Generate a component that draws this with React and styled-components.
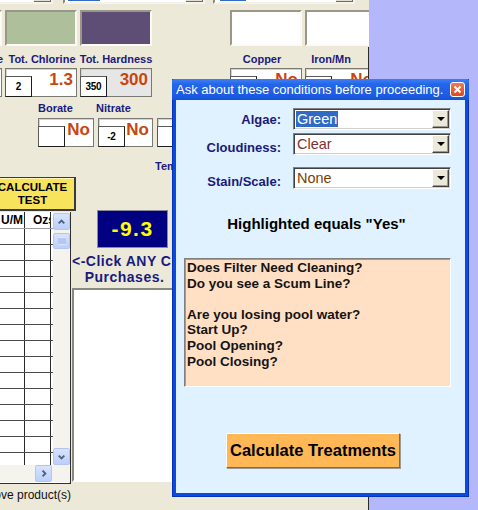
import React from "react";
import styled, { createGlobalStyle } from "styled-components";

const FONT = `"Liberation Sans", Arial, sans-serif`;

const GlobalStyle = createGlobalStyle`
  html, body {
    margin: 0;
    padding: 0;
  }
  body {
    background: #b4b8fa;
    overflow: hidden;
  }
`;

const Screen = styled.div`
  position: relative;
  display: flex;
  width: 478px;
  height: 510px;
  overflow: hidden;
  font-family: ${FONT};
`;

const AppWindow = styled.div`
  position: relative;
  flex: 0 0 369px;
  height: 510px;
  background: #ece9d8;
  overflow: hidden;

  &::after {
    content: "";
    position: absolute;
    right: 0;
    top: 47px;
    bottom: 0;
    width: 1px;
    background: #2b2b2b;
  }
`;

const Desktop = styled.div`
  flex: 1;
  background: #b4b8fa;
`;

const Form = styled.div`
  display: flex;
  flex-direction: column;
`;

/* ---------- top strip of combo boxes (mostly scrolled off) ---------- */

const ComboStrip = styled.div`
  display: flex;
  height: 22px;
  margin-top: -18px;
`;

const StripCombo = styled.div`
  box-sizing: border-box;
  display: flex;
  align-items: center;
  width: ${(p) => p.$w}px;
  margin-left: ${(p) => p.$ml}px;
  height: 22px;
  background: #fff;
  border: 2px solid;
  border-color: #8c8a80 #f4f3ee #f4f3ee #8c8a80;
`;

const StripPick = styled.span`
  margin-left: ${(p) => p.$ml}px;
  width: ${(p) => p.$w}px;
  height: 16px;
  background: #316ac5;
`;

const StripButton = styled.span`
  box-sizing: border-box;
  margin-left: auto;
  width: 17px;
  height: 18px;
  background: #e3e0d2;
  border-right: 1px solid #6b6b6b;
  border-bottom: 1px solid #6b6b6b;
`;

/* ---------- colour swatches, labels, value boxes ---------- */

const TopGrid = styled.div`
  display: grid;
  grid-template-columns: repeat(6, 72px);
  grid-template-rows: 36px 22px 29px;
  column-gap: 3px;
  margin-left: -70px;
  margin-top: 6px;
`;

const Swatch = styled.div`
  box-sizing: border-box;
  grid-row: 1;
  grid-column: ${(p) => p.$col};
  background: ${(p) => p.$color};
  border: 2px solid;
  border-color: #9a978a #fbfaf6 #fbfaf6 #9a978a;
`;

const NavyLabel = styled.div`
  font-size: 11px;
  font-weight: 700;
  line-height: 13px;
  color: #1a1a80;
  white-space: nowrap;
`;

const TopLabel = styled(NavyLabel)`
  grid-row: 2;
  grid-column: ${(p) => p.$col};
  align-self: end;
  justify-self: ${(p) => p.$justify || "center"};
  margin-bottom: 2px;
  margin-left: ${(p) => p.$dx || 0}px;
  margin-right: ${(p) => p.$dr || 0}px;
`;

const ValueBox = styled.div`
  box-sizing: border-box;
  display: flex;
  grid-row: 3;
  grid-column: ${(p) => p.$col};
  width: ${(p) => (p.$w ? `${p.$w}px` : "auto")};
  height: 29px;
  background: ${(p) => p.$bg || "#fff"};
  border: 1px solid #7a7a72;
  box-shadow: inset 1px 1px 0 #d6d3c6;
`;

const SmallBox = styled.div`
  box-sizing: border-box;
  align-self: flex-end;
  display: flex;
  align-items: center;
  justify-content: center;
  width: 27px;
  height: 21px;
  margin: 0 0 -1px -1px;
  background: #fff;
  border: 1px solid;
  border-color: #5a5a5a #1e1e1e #1e1e1e #5a5a5a;
  font-size: 10px;
  font-weight: 700;
  color: #000;
  letter-spacing: -0.3px;
`;

const Reading = styled.span`
  margin-left: auto;
  padding: 1px 3px 0 0;
  font-size: 17px;
  font-weight: 700;
  line-height: 20px;
  color: #c8460e;
`;

const LowerLabels = styled.div`
  display: flex;
  margin: 5px 0 0 38px;
`;

const LowerLabel = styled(NavyLabel)`
  width: ${(p) => p.$w}px;
`;

const LowerBoxes = styled.div`
  display: flex;
  gap: 4px;
  margin: 3px 0 0 38px;
`;

const TempLabel = styled(NavyLabel)`
  width: 17px;
  margin: 13px 0 0 155px;
  overflow: hidden;
`;

/* ---------- lower area: test button, grid, result ---------- */

const Lower = styled.div`
  display: flex;
  align-items: flex-start;
  margin-top: 4px;
`;

const LeftCol = styled.div`
  display: flex;
  flex-direction: column;
  width: 92px;
  margin-left: -21px;
`;

const TestButton = styled.div`
  box-sizing: border-box;
  display: flex;
  flex-direction: column;
  align-items: center;
  justify-content: center;
  width: 86px;
  height: 34px;
  margin-left: 11px;
  background: #f8e45c;
  border: 1px solid #3a3a3a;
  border-right-width: 2px;
  border-bottom-width: 2px;
  box-shadow: inset 1px 1px 0 #fff6b8;
  font-size: 11.5px;
  font-weight: 700;
  line-height: 13px;
  color: #000;
`;

const GridFrame = styled.div`
  box-sizing: border-box;
  display: flex;
  flex-direction: column;
  width: 92px;
  height: 272px;
  margin-top: 1px;
  background: #fff;
  border-right: 1px solid #303030;
  border-bottom: 1px solid #303030;
  box-shadow: inset -1px 0 0 #d9d6ca;
`;

const GridMain = styled.div`
  display: flex;
  height: 253px;
`;

const Cells = styled.div`
  flex: 1;
  overflow: hidden;
`;

const GridRow = styled.div`
  display: grid;
  grid-template-columns: 46px 26px;
  height: ${(p) => (p.$head ? 17 : 16)}px;
  box-sizing: border-box;
  border-bottom: 1px solid ${(p) => (p.$head ? "#9a9a9a" : "#4a4a4a")};
`;

const Cell = styled.div`
  display: flex;
  align-items: center;
  justify-content: ${(p) => p.$justify || "flex-start"};
  padding: ${(p) => p.$pad || "0"};
  border-right: 1px solid #2a2a2a;
  overflow: hidden;
  white-space: nowrap;
  font-size: 12px;
  font-weight: 700;
  color: #000;
`;

const VScroll = styled.div`
  display: flex;
  flex-direction: column;
  width: 17px;
  padding-top: 1px;
  background: #f4f3ee;
`;

const ScrollButton = styled.div`
  box-sizing: border-box;
  display: flex;
  align-items: center;
  justify-content: center;
  width: 17px;
  height: 17px;
  background: linear-gradient(to bottom, #d8e3fd, #bccffa);
  border: 1px solid #b3c6f3;
  border-radius: 2px;
`;

const Thumb = styled(ScrollButton)`
  height: 16px;
  margin-top: 3px;
`;

const Track = styled.div`
  flex: 1;
`;

const HScroll = styled.div`
  display: flex;
  height: 17px;
  background: #f4f3ee;
`;

const Corner = styled.div`
  width: 17px;
  margin-left: 1px;
`;

const Status = styled.div`
  display: flex;
  justify-content: flex-end;
  margin-top: 4px;
  font-size: 12px;
  line-height: 14px;
  color: #111;
  white-space: nowrap;
`;

const MidCol = styled.div`
  display: flex;
  flex-direction: column;
  margin: 33px 0 0 1px;
`;

const ResultBox = styled.div`
  box-sizing: border-box;
  display: flex;
  align-items: center;
  justify-content: center;
  width: 71px;
  height: 38px;
  margin-left: 25px;
  background: #000080;
  border: 1px solid #8a8a9a;
  font-size: 21px;
  font-weight: 700;
  letter-spacing: 1.5px;
  color: #ffff00;
`;

const ClickText = styled.div`
  width: 105px;
  margin-top: 5px;
  overflow: hidden;
  font-size: 14px;
  font-weight: 700;
  line-height: 16px;
  letter-spacing: 0.5px;
  color: #1a1a80;
  text-align: center;
  white-space: nowrap;
`;

const ListBox = styled.div`
  box-sizing: border-box;
  width: 140px;
  height: 194px;
  margin-top: 3px;
  background: #fff;
  border: 2px solid;
  border-color: #8c8a80 #fff #fff #8c8a80;
`;

/* ---------- dialog ---------- */

const Dialog = styled.div`
  position: absolute;
  left: 172px;
  top: 79px;
  box-sizing: border-box;
  display: flex;
  flex-direction: column;
  width: 297px;
  height: 418px;
  padding: 0 3px 3px;
  background: #0b4ade;
  border: 1px solid #0632b8;
  border-top: none;
`;

const TitleBar = styled.div`
  display: flex;
  align-items: center;
  height: 21px;
  margin: 0 -4px;
  padding: 0 4px 0 4px;
  background: linear-gradient(to bottom, #3f7ff4 0%, #2466ea 25%, #1d5ce3 75%, #1552d6 100%);
  border-radius: 2px 2px 0 0;
  color: #fff;
  font-size: 13px;
  white-space: nowrap;
`;

const CloseButton = styled.div`
  box-sizing: border-box;
  display: flex;
  align-items: center;
  justify-content: center;
  width: 15px;
  height: 15px;
  margin-left: auto;
  background: linear-gradient(to bottom, #ee7a55, #d94a22);
  border: 1px solid #fff;
  border-radius: 3px;
`;

const DialogBody = styled.div`
  flex: 1;
  display: flex;
  flex-direction: column;
  background: #e0f2ff;
  padding-top: 8px;
`;

const FieldRow = styled.div`
  display: flex;
  align-items: ${(p) => p.$align};
  margin-top: ${(p) => p.$mt}px;
`;

const FieldLabel = styled.div`
  width: 105px;
  text-align: right;
  font-size: 13px;
  font-weight: 700;
  line-height: 15px;
  color: #1a1a78;
`;

const Combo = styled.div`
  box-sizing: border-box;
  display: flex;
  align-items: center;
  width: 158px;
  height: 22px;
  margin-left: 12px;
  background: #fff;
  border: 1px solid;
  border-color: #808080 #fff #fff #808080;
  box-shadow: inset 1px 1px 0 #404040, inset -1px -1px 0 #d4d0c8;
`;

const ComboText = styled.span`
  margin-left: 2px;
  padding: 0 1px;
  font-size: 14.5px;
  line-height: 16px;
  color: ${(p) => (p.$picked ? "#fff" : p.$color)};
  background: ${(p) => (p.$picked ? "#316ac5" : "transparent")};
`;

const ComboButton = styled.span`
  box-sizing: border-box;
  display: flex;
  align-items: center;
  justify-content: center;
  width: 17px;
  height: 18px;
  margin: 0 1px 0 auto;
  background: #ece9d8;
  border: 1px solid;
  border-color: #fff #404040 #404040 #fff;
  box-shadow: inset -1px -1px 0 #9c9a90;

  &::before {
    content: "";
    border-left: 4px solid transparent;
    border-right: 4px solid transparent;
    border-top: 4px solid #000;
  }
`;

const Heading = styled.div`
  margin-top: 26px;
  padding-right: 8px;
  text-align: center;
  font-size: 15px;
  font-weight: 700;
  line-height: 17px;
  color: #000;
`;

const Questions = styled.div`
  box-sizing: border-box;
  width: 267px;
  height: 129px;
  margin: 26px 0 0 8px;
  padding: 1px 2px;
  background: #ffe0c4;
  border: 1px solid;
  border-color: #808080 #fff #fff #808080;
  box-shadow: inset 1px 1px 0 #a09c90;
  font-size: 13.5px;
  font-weight: 700;
  line-height: 15.6px;
  color: #141414;
  white-space: pre-line;
`;

const TreatButton = styled.div`
  box-sizing: border-box;
  display: flex;
  align-items: center;
  justify-content: center;
  width: 174px;
  height: 35px;
  margin: 46px 0 0 50px;
  background: #ffb855;
  border: 1px solid;
  border-color: #fff #6e6e6e #6e6e6e #fff;
  box-shadow: 1px 1px 0 #9a9a9a;
  font-size: 16.5px;
  font-weight: 700;
  color: #000;
`;

/* ---------- small drawings ---------- */

const Chevron = ({ dir }) => {
  const pts = {
    up: "5,10 8,7 11,10",
    down: "5,7 8,10 11,7",
    right: "7,5 10,8 7,11",
  }[dir];
  return (
    <svg width="15" height="15" viewBox="0 0 16 16">
      <polyline points={pts} fill="none" stroke="#4d6185" strokeWidth="2" />
    </svg>
  );
};

const Grip = () => (
  <svg width="8" height="8" viewBox="0 0 8 8">
    {[1, 3, 5, 7].map((y) => (
      <line key={y} x1="0" x2="8" y1={y} y2={y} stroke="#eef3ff" strokeWidth="1" />
    ))}
    {[2, 4, 6].map((y) => (
      <line key={y} x1="0" x2="8" y1={y} y2={y} stroke="#8fa8e8" strokeWidth="1" />
    ))}
  </svg>
);

const CloseX = () => (
  <svg width="9" height="9" viewBox="0 0 9 9">
    <path d="M1.5 1.5 L7.5 7.5 M7.5 1.5 L1.5 7.5" stroke="#fff" strokeWidth="2" />
  </svg>
);

const questions = `Does Filter Need Cleaning?
Do you see a Scum Line?

Are you losing pool water?
Start Up?
Pool Opening?
Pool Closing?`;

function App() {
  return (
    <Screen>
      <GlobalStyle />
      <AppWindow>
        <Form>
          <ComboStrip>
            <StripCombo $w={103} $ml={-50}>
              <StripButton />
            </StripCombo>
            <StripCombo $w={142} $ml={10}>
              <StripPick $ml={3} $w={32} />
              <StripButton />
            </StripCombo>
            <StripCombo $w={142} $ml={8}>
              <StripPick $ml={5} $w={26} />
              <StripButton />
            </StripCombo>
          </ComboStrip>

          <TopGrid>
            <Swatch $col={1} $color="#fff" />
            <Swatch $col={2} $color="#adbf9b" />
            <Swatch $col={3} $color="#5e4d75" />
            <Swatch $col={5} $color="#fff" />
            <Swatch $col={6} $color="#fff" />

            <TopLabel $col={1} $justify="end" $dr={-1}>Free Chlorine</TopLabel>
            <TopLabel $col={2} $dx={2}>Tot. Chlorine</TopLabel>
            <TopLabel $col={3}>Tot. Hardness</TopLabel>
            <TopLabel $col={5} $dx={-8}>Copper</TopLabel>
            <TopLabel $col={6} $dx={-20}>Iron/Mn</TopLabel>

            <ValueBox $col={1} />
            <ValueBox $col={2}>
              <SmallBox>2</SmallBox>
              <Reading>1.3</Reading>
            </ValueBox>
            <ValueBox $col={3} $bg="#e6e6e6">
              <SmallBox>350</SmallBox>
              <Reading>300</Reading>
            </ValueBox>
            <ValueBox $col={5}>
              <SmallBox />
              <Reading>No</Reading>
            </ValueBox>
            <ValueBox $col={6}>
              <SmallBox />
              <Reading>No</Reading>
            </ValueBox>
          </TopGrid>

          <LowerLabels>
            <LowerLabel $w={58}>Borate</LowerLabel>
            <LowerLabel $w={60}>Nitrate</LowerLabel>
          </LowerLabels>
          <LowerBoxes>
            <ValueBox $w={56}>
              <SmallBox />
              <Reading>No</Reading>
            </ValueBox>
            <ValueBox $w={55}>
              <SmallBox>-2</SmallBox>
              <Reading>No</Reading>
            </ValueBox>
            <ValueBox $w={56}>
              <SmallBox />
              <Reading>No</Reading>
            </ValueBox>
          </LowerBoxes>

          <TempLabel>Temperature</TempLabel>

          <Lower>
            <LeftCol>
              <TestButton>
                <span>CALCULATE</span>
                <span>TEST</span>
              </TestButton>
              <GridFrame>
                <GridMain>
                  <Cells>
                    <GridRow $head>
                      <Cell $justify="flex-end" $pad="0 1px 0 0">U/M</Cell>
                      <Cell $pad="0 0 0 8px">Ozs.</Cell>
                    </GridRow>
                    {Array.from({ length: 15 }).map((_, i) => (
                      <GridRow key={i}>
                        <Cell />
                        <Cell />
                      </GridRow>
                    ))}
                  </Cells>
                  <VScroll>
                    <ScrollButton>
                      <Chevron dir="up" />
                    </ScrollButton>
                    <Thumb>
                      <Grip />
                    </Thumb>
                    <Track />
                    <ScrollButton>
                      <Chevron dir="down" />
                    </ScrollButton>
                  </VScroll>
                </GridMain>
                <HScroll>
                  <Track />
                  <ScrollButton>
                    <Chevron dir="right" />
                  </ScrollButton>
                  <Corner />
                </HScroll>
              </GridFrame>
              <Status>
                <span>Double click to remove product(s)</span>
              </Status>
            </LeftCol>

            <MidCol>
              <ResultBox>-9.3</ResultBox>
              <ClickText>
                <div>&lt;-Click ANY Chemical</div>
                <div>Purchases.</div>
              </ClickText>
              <ListBox />
            </MidCol>
          </Lower>
        </Form>
      </AppWindow>
      <Desktop />

      <Dialog>
        <TitleBar>
          <span>Ask about these conditions before proceeding.</span>
          <CloseButton>
            <CloseX />
          </CloseButton>
        </TitleBar>
        <DialogBody>
          <FieldRow $align="center" $mt={0}>
            <FieldLabel>Algae:</FieldLabel>
            <Combo>
              <ComboText $picked>Green</ComboText>
              <ComboButton />
            </Combo>
          </FieldRow>
          <FieldRow $align="flex-end" $mt={3}>
            <FieldLabel>Cloudiness:</FieldLabel>
            <Combo>
              <ComboText $color="#7f2f2f">Clear</ComboText>
              <ComboButton />
            </Combo>
          </FieldRow>
          <FieldRow $align="flex-end" $mt={12}>
            <FieldLabel>Stain/Scale:</FieldLabel>
            <Combo>
              <ComboText $color="#804000">None</ComboText>
              <ComboButton />
            </Combo>
          </FieldRow>

          <Heading>Highlighted equals "Yes"</Heading>
          <Questions>{questions}</Questions>
          <TreatButton>Calculate Treatments</TreatButton>
        </DialogBody>
      </Dialog>
    </Screen>
  );
}

export default App;
